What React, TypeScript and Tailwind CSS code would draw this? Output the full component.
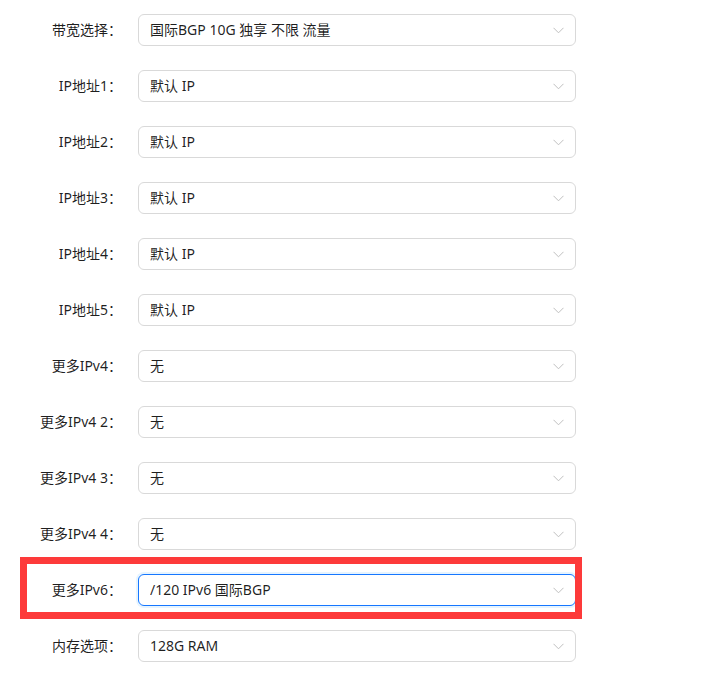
interface Field {
  label: string
  value: string
  focused?: boolean
}

const fields: Field[] = [
  { label: "带宽选择", value: "国际BGP 10G 独享 不限 流量" },
  { label: "IP地址1", value: "默认 IP" },
  { label: "IP地址2", value: "默认 IP" },
  { label: "IP地址3", value: "默认 IP" },
  { label: "IP地址4", value: "默认 IP" },
  { label: "IP地址5", value: "默认 IP" },
  { label: "更多IPv4", value: "无" },
  { label: "更多IPv4 2", value: "无" },
  { label: "更多IPv4 3", value: "无" },
  { label: "更多IPv4 4", value: "无" },
  { label: "更多IPv6", value: "/120 IPv6 国际BGP", focused: true },
  { label: "内存选项", value: "128G RAM" },
]

function Chevron() {
  return (
    <svg width="11" height="7" viewBox="0 0 11 7" fill="none" className="shrink-0">
      <path d="M0.5 0.8 L5.5 5.8 L10.5 0.8" stroke="#bfbfbf" strokeWidth="1" />
    </svg>
  )
}

function SelectRow({ label, value, focused }: Field) {
  return (
    <div className="relative flex h-8 items-center">
      <label className="relative -top-px w-[122px] shrink-0 text-right text-[14px] text-[rgba(0,0,0,0.88)]">
        {label}：
      </label>
      <div
        className={
          focused
            ? "ml-4 flex h-8 w-[438px] items-center justify-between rounded-md border border-[#1677ff] bg-white pl-[11px] pr-[11px] shadow-[0_0_0_2px_rgba(5,145,255,0.1)]"
            : "ml-4 flex h-8 w-[438px] items-center justify-between rounded-md border border-[#d9d9d9] bg-white pl-[11px] pr-[11px]"
        }
      >
        <span className="relative -top-px truncate text-[14px] text-[rgba(0,0,0,0.88)]">{value}</span>
        <Chevron />
      </div>
      {/* annotation box drawn over the highlighted row */}
      {focused && (
        <div className="pointer-events-none absolute left-[20px] top-[-17px] z-10 h-[62px] w-[562px] border-[7px] border-[#fd3a3a]" />
      )}
    </div>
  )
}

export default function App() {
  return (
    <div
      className="min-h-[684px] w-[724px] bg-white pt-[14px]"
      style={{ fontFamily: '"Noto Sans", "Noto Sans CJK SC", sans-serif' }}
    >
      <div className="flex flex-col gap-6">
        {fields.map((f) => (
          <SelectRow key={f.label} {...f} />
        ))}
      </div>
    </div>
  )
}
